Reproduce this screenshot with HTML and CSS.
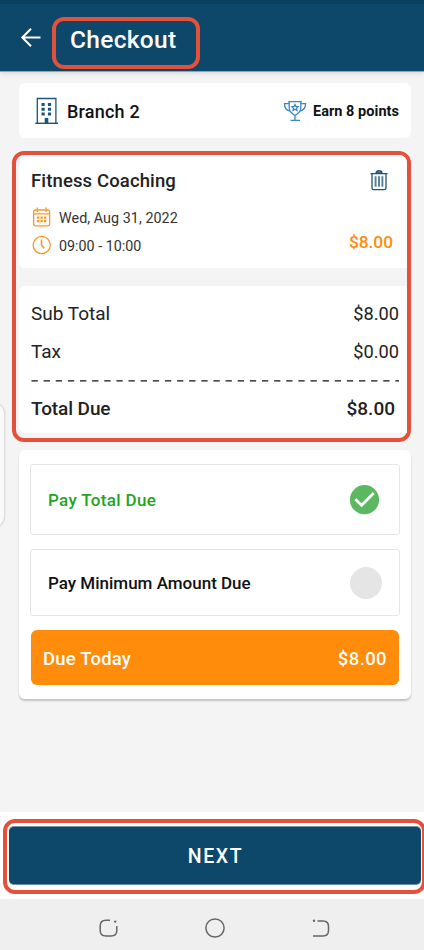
FILE: index.html
```html
<!DOCTYPE html>
<html lang="en">
<head>
<meta charset="utf-8">
<title>Checkout</title>
<link rel="stylesheet" href="styles.css">
</head>
<body>
<div class="screen">
  <header class="topbar">
    <svg class="back" width="20" height="20" viewBox="0 0 20 20" fill="none" stroke="#fff" stroke-width="2"><path d="M19.500 9.500H1.500M10 .7L1.300 9.500l8.700 8.800"/></svg>
    <h1 class="title">Checkout</h1>
  </header>

  <main class="content">
    <section class="card branch">
      <svg class="building" width="24" height="28" viewBox="0 0 24 28"><path d="M2.300 26V1.500h18.600V26" fill="none" stroke="#1c5578" stroke-width="1.300"/><path d="M.3 26.300h22.700" stroke="#1c5578" stroke-width="1.400"/><path d="M6.500 6h3.200v3H6.500zM12.900 6h3.200v3h-3.200zM6.500 10.800h3.200v3H6.500zM12.900 10.800h3.200v3h-3.200zM6.500 15.600h3.200v3H6.500zM12.900 15.600h3.200v3h-3.200zM9.700 21h3.600v5.500H9.700z" fill="#1c5578"/></svg>
      <span class="branch-name">Branch 2</span>
      <svg class="trophy" width="24" height="22" viewBox="0 0 24 22" fill="none" stroke="#3a86c6" stroke-width="1.300"><path d="M6.200 1.600h11.600v6.200c0 3.600-2.200 5.200-4 6.400-.8.5-1.200 1-1.800 1-.6 0-1-.5-1.800-1-1.800-1.200-4-2.800-4-6.400zM5.200 1.600h13.600M6.200 3.700H1.400c0 4 1.800 6.700 6 7.500M17.800 3.700h4.800c0 4-1.800 6.700-6 7.500M12 15v5M7.500 20.400h9.500"/><path d="M12 4.500l.9 2 2.200.2-1.600 1.500.4 2.200-1.900-1.100-1.900 1.100.4-2.200-1.600-1.500 2.200-.2z"/></svg>
      <span class="points">Earn 8 points</span>
    </section>

    <div class="marked">
      <section class="item">
        <div class="item-head">
          <h2 class="item-name">Fitness Coaching</h2>
          <svg class="trash" width="18" height="21" viewBox="0 0 18 21" fill="none" stroke="#1c5578" stroke-width="1.300"><path d="M6 3c0-3 6-3 6 0z" fill="#9db4c3"/><path d="M.5 3.600h17M2 3.600v14.400c0 1.200.6 1.700 1.700 1.700h10.600c1.100 0 1.700-.5 1.700-1.700V3.600"/><path d="M5.600 6.200v10.600M9 6.200v10.600M12.400 6.200v10.600" stroke="#537f9a" stroke-width="1.900"/></svg>
        </div>
        <div class="item-body">
          <div class="when">
            <div class="when-row">
              <svg width="19" height="20" viewBox="0 0 19 20"><g fill="none" stroke="#ff9727" stroke-width="1.300"><rect x="1.600" y="3" width="16" height="15.800" rx="1.800"/><path d="M1.600 6.900h16M5.300.5v4.500M14 .5v4.500"/></g><path d="M4.900 9.600h2.400v2.200H4.900zM8.400 9.600h2.400v2.200H8.400zM11.900 9.600h2.400v2.200h-2.400zM4.900 13.100h2.400v2.200H4.900zM8.400 13.100h2.400v2.200H8.400zM11.900 13.100h2.400v2.200h-2.400z" fill="#ff9727"/></svg>
              <span class="date">Wed, Aug 31, 2022</span>
            </div>
            <div class="when-row">
              <svg width="19" height="20" viewBox="0 0 19 20" fill="none" stroke="#ff9727" stroke-width="1.300"><circle cx="9.700" cy="10" r="8.600"/><path d="M9.500 4.500v5.800l2.800 3.100" stroke-width="1.600"/></svg>
              <span class="time">09:00 - 10:00</span>
            </div>
          </div>
          <span class="price">$8.00</span>
        </div>
      </section>
      <section class="totals">
        <div class="row"><span class="sub">Sub Total</span><span class="amt">$8.00</span></div>
        <div class="row tax-row"><span class="tax">Tax</span><span class="amt">$0.00</span></div>
        <svg class="dashes" width="368" height="2" viewBox="0 0 368 2"><path d="M.5 .9H368" stroke="#111" stroke-width="1.300" stroke-dasharray="6.300 5.830"/></svg>
        <div class="row due"><span class="due-label">Total Due</span><span class="due-amt">$8.00</span></div>
      </section>
    </div>

    <section class="card pay">
      <div class="option selected">
        <span class="opt-total">Pay Total Due</span>
        <svg width="30" height="30" viewBox="0 0 30 30"><circle cx="14.500" cy="14.700" r="14.600" fill="#5cb860"/><path d="M5.300 14.300l6.300 5.900L23.800 8" fill="none" stroke="#fff" stroke-width="2.800"/></svg>
      </div>
      <div class="option">
        <span class="opt-min">Pay Minimum Amount Due</span>
        <span class="radio"></span>
      </div>
      <div class="today"><span class="today-label">Due Today</span><span class="today-amt">$8.00</span></div>
    </section>
  </main>

  <footer class="footer">
    <div class="next-mark"><button class="next">NEXT</button></div>
  </footer>
  <nav class="nav">
    <svg width="20" height="20" viewBox="0 0 20 20" fill="none" stroke="#666" stroke-width="1.500"><path d="M11 1.300H7Q1.200 1.300 1.200 7v4.500Q1.200 17 7 17h5Q17.800 17 17.800 11.500V7"/><circle cx="16.200" cy="2.600" r="1.200" fill="#666" stroke="none"/></svg>
    <svg width="20" height="20" viewBox="0 0 20 20" fill="none" stroke="#666" stroke-width="1.500"><circle cx="10" cy="9" r="9.100"/></svg>
    <svg width="20" height="20" viewBox="0 0 20 20" fill="none" stroke="#666" stroke-width="1.500"><path d="M6.500 2H12q5.500 0 5.500 5.500v4Q17.500 17 12 17H2"/><circle cx="3" cy="1.800" r="1.200" fill="#666" stroke="none"/></svg>
  </nav>
  <div class="edge-panel"></div>
</div>
</body>
</html>
```
FILE: styles.css
```css
* { box-sizing: border-box; }
body { margin: 0; font-family: Roboto, sans-serif; color: #222; }
h1, h2 { margin: 0; font-weight: 500; }
svg { display: block; flex: none; overflow: visible; }
span, h1, h2 { white-space: nowrap; }
.screen { position: relative; width: 424px; height: 950px; overflow: hidden; background: #f4f4f4; display: flex; flex-direction: column; }

.topbar { flex: none; height: 71px; background: #0d486b; border-top: 4px solid #0b3f5e; display: flex; align-items: flex-start; padding: 13px 0 0 21px; box-shadow: 0 1px 0 #8fa6b5, 0 2px 5px #0002; }
.back { margin-top: 11px; }
.title { width: 148px; height: 52px; margin-left: 11px; border: 4px solid #e4503a; border-radius: 12px; padding-left: 14px; font-size: 24.5px; line-height: 37px; letter-spacing: .3px; color: #fff; }

.content { flex: 1; padding: 12px 13px 0 12px; }
.card { margin-left: 7px; background: #fff; border-radius: 6px; }
.branch { height: 55px; display: flex; align-items: center; padding: 0 12px 0 16px; }
.branch-name { margin: 1px 0 0 8px; font-size: 18px; font-weight: 500; letter-spacing: .2px; color: #111; }
.trophy { margin-left: auto; margin-right: 6px; }
.points { margin-top: 2px; font-size: 14.5px; font-weight: 700; letter-spacing: .04px; color: #111; }

.marked { height: 291px; margin-top: 13px; border: 4px solid #e4503a; border-radius: 12px; padding-left: 3px; }
.item { height: 113px; background: #fff; border-radius: 6px 8px 0 6px; padding: 14px 14px 0 12px; }
.item-head { display: flex; justify-content: space-between; height: 38px; }
.item-name { font-size: 18.5px; line-height: 24px; letter-spacing: .13px; }
.trash { margin: 1px 5px 0 0; }
.item-body { display: flex; justify-content: space-between; }
.when { display: grid; gap: 8px; }
.when-row { display: flex; align-items: center; gap: 8px; height: 20px; margin-left: 1px; font-size: 14.3px; color: #333; }
.date, .time { padding-top: 1px; }
.date { letter-spacing: .06px; }
.price { margin-top: 23px; font-size: 17.3px; font-weight: 500; line-height: 24px; color: #ff8c0a; }

.totals { height: 147px; margin-top: 18px; background: #fff; border-radius: 6px 0 0 6px; padding: 16px 8px 0 12px; }
.row { display: flex; justify-content: space-between; font-size: 19px; line-height: 24px; }
.amt { font-size: 18.2px; }
.tax-row { margin-top: 13.500px; }
.dashes { margin-top: 16px; }
.due { margin-top: 15.500px; padding-right: 4px; font-weight: 500; }
.due-label { letter-spacing: -.1px; }

.pay { height: 249px; margin-top: 8px; padding: 14px 11px 0; box-shadow: 0 2px 2px #0003; }
.option { height: 67px; margin-bottom: 14px; border: 1px solid #e5e5e5; border-radius: 3px; display: flex; align-items: center; justify-content: space-between; padding: 0 17px; font-size: 17px; font-weight: 500; color: #111; }
.selected { height: 71px; padding-right: 19px; color: #23a523; }
.opt-total { letter-spacing: .33px; }
.radio { width: 32px; height: 32px; border-radius: 50%; background: #e5e5e5; }
.today { height: 55px; margin: 0 1px; background: #ff8c0a; border-radius: 6px; color: #fff; display: flex; align-items: center; justify-content: space-between; padding: 2px 12px 0; font-size: 18.5px; font-weight: 500; }
.today-label { letter-spacing: .2px; }
.today-amt { letter-spacing: .4px; }

.footer { flex: none; height: 87px; background: #fff; padding: 7px 0 0 3px; }
.next-mark { width: 423px; height: 75px; border: 4px solid #e4503a; border-radius: 12px; padding: 3px 1px 0 2px; }
.next { display: block; width: 412px; height: 59px; border: 1px solid #6e91a8; border-width: 1px 0; border-radius: 5px; background: #0d486b; color: #fff; font: 500 19.5px Roboto, sans-serif; letter-spacing: 1.6px; padding: 2px 0 0 1px; }
.nav { flex: none; height: 51px; background: #efefef; display: flex; justify-content: space-between; padding: 20px 93px 0 99px; }
.edge-panel { position: absolute; left: -20px; top: 402px; width: 25px; height: 126px; border: 1px solid #ddd; border-radius: 12px; background: #fafafa; box-shadow: 0 0 2px #0002; }
```
